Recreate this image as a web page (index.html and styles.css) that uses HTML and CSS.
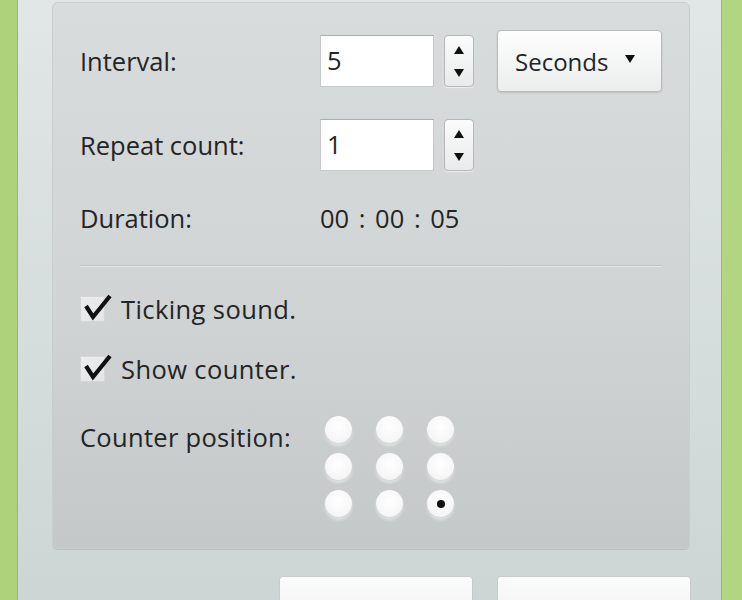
FILE: index.html
```html
<!DOCTYPE html>
<html>
<head>
<meta charset="utf-8">
<link rel="stylesheet" href="styles.css">
</head>
<body>
<div class="frame">
  <div class="window">
    <div class="panel">
      <div class="row row-interval">
        <div class="label">Interval:</div>
        <div class="field">5</div>
        <div class="spinner"><span class="up"></span><span class="down"></span></div>
        <div class="dropdown">Seconds <span class="caret"></span></div>
      </div>
      <div class="row row-repeat">
        <div class="label">Repeat count:</div>
        <div class="field">1</div>
        <div class="spinner"><span class="up"></span><span class="down"></span></div>
      </div>
      <div class="row row-duration">
        <div class="label">Duration:</div>
        <div class="value">00 : 00 : 05</div>
      </div>
      <div class="separator"></div>
      <div class="check check-first">
        <span class="box"><svg viewBox="0 0 32 32" width="32" height="32"><path d="M5 14 L12 25 L29 4" fill="none" stroke="#111" stroke-width="4.2" stroke-linejoin="miter"/></svg></span>
        <span class="check-text">Ticking sound.</span>
      </div>
      <div class="check">
        <span class="box"><svg viewBox="0 0 32 32" width="32" height="32"><path d="M5 14 L12 25 L29 4" fill="none" stroke="#111" stroke-width="4.2" stroke-linejoin="miter"/></svg></span>
        <span class="check-text">Show counter.</span>
      </div>
      <div class="row row-position">
        <div class="label">Counter position:</div>
        <div class="grid">
          <span class="radio"></span><span class="radio"></span><span class="radio"></span>
          <span class="radio"></span><span class="radio"></span><span class="radio"></span>
          <span class="radio"></span><span class="radio"></span><span class="radio selected"></span>
        </div>
      </div>
    </div>
    <div class="buttons">
      <div class="btn"></div>
      <div class="btn"></div>
    </div>
  </div>
</div>
</body>
</html>
```

FILE: styles.css
```css
html, body {
  margin: 0;
  padding: 0;
  width: 742px;
  height: 600px;
  overflow: hidden;
}

body {
  font-family: "Open Sans", "Noto Sans", sans-serif;
  font-size: 25.5px;
  color: #232525;
}

.frame {
  width: 742px;
  height: 600px;
  box-sizing: border-box;
  border-left: 17px solid #aed17c;
  border-right: 20px solid #b2d581;
  display: flex;
}

.window {
  flex: 1;
  box-sizing: border-box;
  padding: 2px 32px 0 35px;
  background: linear-gradient(to bottom, #e1e6e6 0%, #d5dcdc 60%, #cdd5d5 100%);
  box-shadow: inset 1px 0 0 #98b86a, inset -1px 0 0 #98b86a;
}

.panel {
  height: 547px;
  box-sizing: border-box;
  border-radius: 6px;
  border: 1px solid #c9cdcd;
  background: linear-gradient(to bottom, #d8dcdc 0%, #d0d4d4 55%, #c4c8c8 100%);
  box-shadow: 0 1px 0 #b9bdbd;
  padding: 27px 27px 0 27px;
}

.row {
  display: flex;
  align-items: center;
}

.label {
  width: 240px;
  flex: none;
}

.row-interval {
  height: 62px;
}

.field {
  width: 114px;
  height: 52px;
  box-sizing: border-box;
  background: #ffffff;
  border: 1px solid #c6c9c9;
  border-top-color: #a9adad;
  padding-left: 6px;
  line-height: 48px;
  flex: none;
}

.spinner {
  width: 30px;
  height: 52px;
  margin-left: 10px;
  box-sizing: border-box;
  border: 1px solid #b4b8b8;
  border-radius: 4px;
  background: linear-gradient(to bottom, #fbfbfb, #e9ebeb);
  box-shadow: 0 1px 1px rgba(255,255,255,0.6);
  display: flex;
  flex-direction: column;
  align-items: center;
  justify-content: space-between;
  padding: 10px 0 9px;
  flex: none;
}

.up {
  width: 0;
  height: 0;
  border-left: 5px solid transparent;
  border-right: 5px solid transparent;
  border-bottom: 8px solid #111;
}

.down {
  width: 0;
  height: 0;
  border-left: 5px solid transparent;
  border-right: 5px solid transparent;
  border-top: 8px solid #111;
}

.dropdown {
  width: 165px;
  height: 62px;
  margin-left: 23px;
  box-sizing: border-box;
  border: 1px solid #b6baba;
  border-radius: 4px;
  background: linear-gradient(to bottom, #fdfdfd, #eceeee);
  box-shadow: 0 1px 2px rgba(0,0,0,0.12);
  display: flex;
  align-items: center;
  padding-left: 17px;
  gap: 17px;
  flex: none;
  font-size: 24px;
}

.caret {
  width: 0;
  height: 0;
  border-left: 5.5px solid transparent;
  border-right: 5.5px solid transparent;
  border-top: 8px solid #111;
  margin-top: -4px;
}

.row-repeat {
  height: 52px;
  margin-top: 27px;
}

.row-duration {
  height: 30px;
  margin-top: 32px;
}

.value {
  word-spacing: 3px;
}

.separator {
  height: 1px;
  margin-top: 32px;
  background: #c2c6c6;
  box-shadow: 0 1px 0 #e3e6e6;
}

.check {
  display: flex;
  align-items: center;
  height: 30px;
  margin-top: 30px;
}

.check-first {
  margin-top: 28px;
}

.check-text {
  letter-spacing: 0.4px;
}

.box {
  position: relative;
  width: 25px;
  height: 26px;
  box-sizing: border-box;
  border: 1px solid #d4d7d7;
  background: linear-gradient(135deg, #eceeee, #e2e5e5);
  margin-right: 16px;
  flex: none;
}

.box svg {
  position: absolute;
  left: 0;
  top: -5px;
}

.row-position {
  align-items: flex-start;
  margin-top: 32px;
}

.row-position .label {
  margin-top: 4px;
  letter-spacing: 0.3px;
}

.grid {
  display: grid;
  grid-template-columns: repeat(3, 27px);
  grid-auto-rows: 27px;
  column-gap: 24px;
  row-gap: 10px;
  margin-left: 5px;
}

.radio {
  width: 27px;
  height: 27px;
  border-radius: 50%;
  box-sizing: border-box;
  background: radial-gradient(circle at 50% 40%, #ffffff 0%, #f7f7f7 60%, #ebecec 100%);
  box-shadow: 0 0 0 1px rgba(205,209,209,0.5), 0 3px 3px rgba(235,238,238,0.7);
  display: flex;
  align-items: center;
  justify-content: center;
}

.selected::after {
  content: "";
  width: 8px;
  height: 8px;
  border-radius: 50%;
  background: #111;
}

.buttons {
  display: flex;
  justify-content: flex-end;
  gap: 26px;
  margin-top: 28px;
}

.btn {
  width: 192px;
  height: 46px;
  box-sizing: border-box;
  border-radius: 3px;
  background: linear-gradient(to bottom, #fbfbfb, #f2f3f3);
  box-shadow: 0 0 0 1px #c8cbcb;
}
```
